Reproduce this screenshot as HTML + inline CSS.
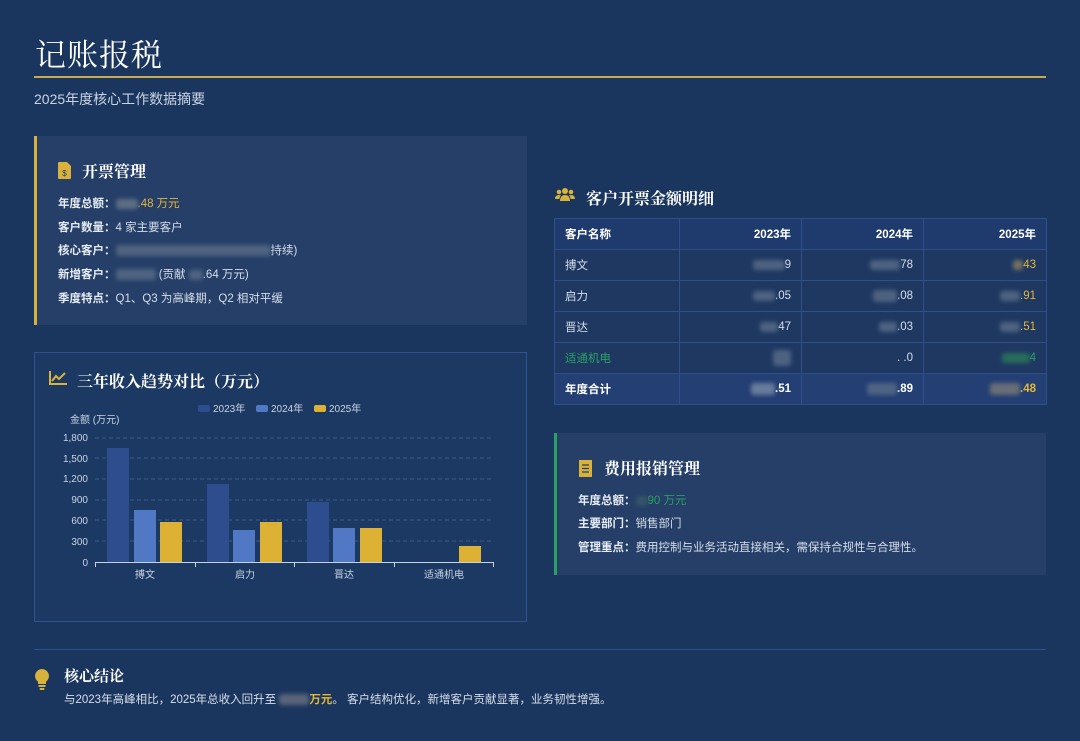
<!DOCTYPE html>
<html><head><meta charset="utf-8"><style>
*{margin:0;padding:0;box-sizing:border-box}
body{width:1080px;height:741px;background:#1b365e;font-family:"Liberation Sans","Noto Sans CJK SC",sans-serif;color:#d6deea;position:relative;overflow:hidden}
.abs{position:absolute}
h1{position:absolute;left:35px;top:30px;font-family:"Liberation Serif","Noto Serif CJK SC",serif;font-size:31px;font-weight:normal;color:#fff;letter-spacing:1px}
.rule{left:34px;top:76px;width:1012px;height:2px;background:#c9aa4e}
.sub{left:34px;top:89px;font-size:14px;color:#c8d3e3}
.card{background:#253f68}
.ttl{font-family:"Liberation Serif","Noto Serif CJK SC",serif;font-weight:bold;color:#fff;font-size:16px}
.row{font-size:11.5px;color:#d6deea;position:absolute;left:21px;white-space:nowrap}
.row b{color:#e6ecf4}
.blur{display:inline-block;background:#5a6d88;filter:blur(2px);border-radius:3px;vertical-align:middle;opacity:.8}
table{border-collapse:collapse;position:absolute;left:554px;top:218px;width:492px;font-size:11.5px;table-layout:fixed}
td{border:1px solid #2e4f8a;height:31px;padding:0 10px;text-align:right;color:#d6deea}
td:first-child{text-align:left}
tr.h td{background:#1f3a6c;color:#fff;font-weight:bold}
tr.t td{background:#233f73;font-weight:bold;color:#fff}
tbody tr td{background:#1e3862}
.y{color:#e3b73a}.g{color:#2aa063}
</style></head><body>
<h1>记账报税</h1>
<div class="abs rule"></div>
<div class="abs sub">2025年度核心工作数据摘要</div>

<div class="abs card" style="left:34px;top:136px;width:493px;height:189px;border-left:3px solid #d6b23a">
 <svg class="abs" style="left:21px;top:26px" width="13" height="17" viewBox="0 0 13 17"><path d="M1 0h8l4 4v12a1 1 0 0 1-1 1H1a1 1 0 0 1-1-1V1a1 1 0 0 1 1-1z" fill="#d8b23a"/><text x="6.5" y="14" font-size="8" text-anchor="middle" fill="#253f68" font-family="Liberation Sans">$</text></svg>
 <div class="abs ttl" style="left:45px;top:23px">开票管理</div>
 <div class="row" style="top:59px"><b>年度总额：</b><span class="blur" style="width:22px;height:10px;background:#6a7a8a"></span><span class="y">.48 万元</span></div>
 <div class="row" style="top:83px"><b>客户数量：</b>4 家主要客户</div>
 <div class="row" style="top:106px"><b>核心客户：</b><span class="blur" style="width:155px;height:11px"></span>持续)</div>
 <div class="row" style="top:130px"><b>新增客户：</b><span class="blur" style="width:40px;height:11px"></span> (贡献 <span class="blur" style="width:14px;height:10px"></span>.64 万元)</div>
 <div class="row" style="top:154px"><b>季度特点：</b>Q1、Q3 为高峰期，Q2 相对平缓</div>
</div>

<div class="abs" style="left:34px;top:352px;width:493px;height:270px;border:1px solid #2f5290;background:#1c3963">
 <svg class="abs" style="left:14px;top:18px" width="18" height="14" viewBox="0 0 18 14"><path d="M1 0v13h17M3 10l4-5 3 3 6-6" stroke="#d8b23a" stroke-width="2" fill="none"/></svg>
 <div class="abs ttl" style="left:42px;top:16px">三年收入趋势对比（万元）</div>
 <svg class="abs" style="left:-1px;top:-1px" width="493" height="270" viewBox="34 352 493 270" font-family="Liberation Sans,Noto Sans CJK SC,sans-serif">
  <g font-size="10" fill="#c8d3e3">
   <rect x="198" y="405" width="12" height="7" rx="2" fill="#2e4d8f"/><text x="213" y="412">2023年</text>
   <rect x="256" y="405" width="12" height="7" rx="2" fill="#5078c4"/><text x="271" y="412">2024年</text>
   <rect x="314" y="405" width="12" height="7" rx="2" fill="#dcb134"/><text x="329" y="412">2025年</text>
   <text x="70" y="423">金额 (万元)</text>
   <g text-anchor="end"><text x="88" y="441">1,800</text><text x="88" y="462">1,500</text><text x="88" y="482">1,200</text><text x="88" y="503">900</text><text x="88" y="524">600</text><text x="88" y="545">300</text><text x="88" y="566">0</text></g>
  </g>
  <g stroke="#3b5a8a" stroke-dasharray="4 3"><line x1="95" y1="438" x2="494" y2="438"/><line x1="95" y1="458" x2="494" y2="458"/><line x1="95" y1="479" x2="494" y2="479"/><line x1="95" y1="500" x2="494" y2="500"/><line x1="95" y1="520" x2="494" y2="520"/><line x1="95" y1="541" x2="494" y2="541"/></g>
  <g fill="#2e4d8f"><rect x="107" y="448" width="22" height="114"/><rect x="207" y="484" width="22" height="78"/><rect x="307" y="502" width="22" height="60"/></g>
  <g fill="#5078c4"><rect x="134" y="510" width="22" height="52"/><rect x="233" y="530" width="22" height="32"/><rect x="333" y="528" width="22" height="34"/></g>
  <g fill="#dcb134"><rect x="160" y="522" width="22" height="40"/><rect x="260" y="522" width="22" height="40"/><rect x="360" y="528" width="22" height="34"/><rect x="459" y="546" width="22" height="16"/></g>
  <g stroke="#c8d3e3"><line x1="95" y1="562.5" x2="494" y2="562.5"/><line x1="95.5" y1="562" x2="95.5" y2="567"/><line x1="195.5" y1="562" x2="195.5" y2="567"/><line x1="294.5" y1="562" x2="294.5" y2="567"/><line x1="394.5" y1="562" x2="394.5" y2="567"/><line x1="493.5" y1="562" x2="493.5" y2="567"/></g>
  <g font-size="10" fill="#c8d3e3" text-anchor="middle"><text x="145" y="578">搏文</text><text x="245" y="578">启力</text><text x="344" y="578">晋达</text><text x="444" y="578">适通机电</text></g>
 </svg>
</div>

<svg class="abs" style="left:555px;top:187px" width="20" height="15" viewBox="0 0 20 15"><g fill="#d8b23a"><circle cx="10" cy="4" r="3"/><circle cx="4" cy="5" r="2.3"/><circle cx="16" cy="5" r="2.3"/><path d="M5 14c0-4 2-6 5-6s5 2 5 6z"/><path d="M0 12c0-3 2-4 4-4 1 0 2 .5 2 .5-1 1-1.5 2-1.5 3.5z"/><path d="M20 12c0-3-2-4-4-4-1 0-2 .5-2 .5 1 1 1.5 2 1.5 3.5z"/></g></svg>
<div class="abs ttl" style="left:586px;top:186px">客户开票金额明细</div>
<table>
<colgroup><col style="width:125px"><col style="width:122px"><col style="width:122px"><col style="width:123px"></colgroup>
<tr class="h"><td>客户名称</td><td>2023年</td><td>2024年</td><td>2025年</td></tr>
<tbody>
<tr><td>搏文</td><td><span class="blur" style="width:32px;height:10px"></span>9</td><td><span class="blur" style="width:30px;height:10px"></span>78</td><td><span class="blur" style="width:10px;height:10px;background:#8a8060"></span><span class="y">43</span></td></tr>
<tr><td>启力</td><td><span class="blur" style="width:22px;height:10px"></span>.05</td><td><span class="blur" style="width:24px;height:12px"></span>.08</td><td><span class="blur" style="width:20px;height:10px"></span><span class="y">.91</span></td></tr>
<tr><td>晋达</td><td><span class="blur" style="width:18px;height:10px"></span>47</td><td><span class="blur" style="width:18px;height:10px"></span>.03</td><td><span class="blur" style="width:20px;height:10px"></span><span class="y">.51</span></td></tr>
<tr><td class="g">适通机电</td><td><span class="blur" style="width:18px;height:16px"></span></td><td>. .0</td><td><span class="blur" style="width:28px;height:10px;background:#2a7a5a"></span><span class="g">4</span></td></tr>
</tbody>
<tr class="t"><td>年度合计</td><td><span class="blur" style="width:24px;height:12px;background:#7a8aa8"></span>.51</td><td><span class="blur" style="width:30px;height:12px"></span>.89</td><td><span class="blur" style="width:30px;height:12px;background:#7a7a78"></span><span class="y">.48</span></td></tr>
</table>

<div class="abs card" style="left:554px;top:433px;width:492px;height:142px;border-left:3px solid #2aa063">
 <svg class="abs" style="left:22px;top:27px" width="13" height="17" viewBox="0 0 13 17"><rect width="13" height="17" fill="#d8b23a"/><path d="M3 5h7M3 8.5h7M3 12h7" stroke="#253f68" stroke-width="1.3"/></svg>
 <div class="abs ttl" style="left:47px;top:23px">费用报销管理</div>
 <div class="row" style="top:59px"><b>年度总额：</b><span class="blur" style="width:12px;height:10px;background:#3a5a68"></span><span class="g">90 万元</span></div>
 <div class="row" style="top:82px"><b>主要部门：</b>销售部门</div>
 <div class="row" style="top:106px"><b>管理重点：</b>费用控制与业务活动直接相关，需保持合规性与合理性。</div>
</div>

<div class="abs" style="left:34px;top:649px;width:1012px;height:1px;background:#2e5090"></div>
<svg class="abs" style="left:35px;top:669px" width="14" height="21" viewBox="0 0 14 21"><path d="M7 0a7 7 0 0 1 4 12.7V15H3v-2.3A7 7 0 0 1 7 0z" fill="#d8b23a"/><rect x="3.5" y="16" width="7" height="2" fill="#d8b23a"/><rect x="4.5" y="19" width="5" height="2" rx="1" fill="#d8b23a"/></svg>
<div class="abs ttl" style="left:64px;top:665px;font-size:15px">核心结论</div>
<div class="abs" style="left:64px;top:691px;font-size:11.5px;color:#d6deea;white-space:nowrap">与2023年高峰相比，2025年总收入回升至 <span class="blur" style="width:30px;height:11px;background:#6a7080"></span><b class="y">万元</b>。 客户结构优化，新增客户贡献显著，业务韧性增强。</div>
</body></html>
